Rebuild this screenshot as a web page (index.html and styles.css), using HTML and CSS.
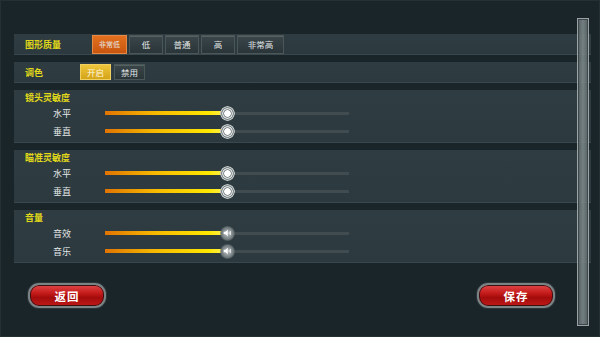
FILE: index.html
```html
<!DOCTYPE html>
<html lang="zh-CN">
<head>
  <meta charset="UTF-8">
  <title>设置</title>
  <link rel="stylesheet" href="styles.css">
</head>
<body>
  <div class="screen">
    <div class="panel row">
      <span class="label label-wide">图形质量</span>
      <div class="btn-group">
        <span class="opt opt-active small">非常低</span>
        <span class="opt">低</span>
        <span class="opt">普通</span>
        <span class="opt">高</span>
        <span class="opt opt-wide">非常高</span>
      </div>
    </div>

    <div class="panel row">
      <span class="label label-narrow">调色</span>
      <div class="btn-group tone">
        <span class="opt opt-on">开启</span>
        <span class="opt">禁用</span>
      </div>
    </div>

    <div class="panel section">
      <div class="label title">镜头灵敏度</div>
      <div class="slider-row">
        <span class="slider-name">水平</span>
        <div class="track"><div class="fill" style="width: 50%"></div><span class="knob"></span></div>
      </div>
      <div class="slider-row">
        <span class="slider-name">垂直</span>
        <div class="track"><div class="fill" style="width: 50%"></div><span class="knob"></span></div>
      </div>
    </div>

    <div class="panel section">
      <div class="label title">瞄准灵敏度</div>
      <div class="slider-row">
        <span class="slider-name">水平</span>
        <div class="track"><div class="fill" style="width: 50%"></div><span class="knob"></span></div>
      </div>
      <div class="slider-row">
        <span class="slider-name">垂直</span>
        <div class="track"><div class="fill" style="width: 50%"></div><span class="knob"></span></div>
      </div>
    </div>

    <div class="panel section">
      <div class="label title">音量</div>
      <div class="slider-row">
        <span class="slider-name">音效</span>
        <div class="track"><div class="fill" style="width: 50%"></div>
          <span class="knob knob-sound">
            <svg viewBox="0 0 12 12" width="10" height="10"><path d="M2 4.5h2l3-2.5v8l-3-2.5h-2z" fill="#fff"/><path d="M8.5 4.5v3M10 3.5v5" stroke="#fff" stroke-width="1"/></svg>
          </span>
        </div>
      </div>
      <div class="slider-row">
        <span class="slider-name">音乐</span>
        <div class="track"><div class="fill" style="width: 50%"></div>
          <span class="knob knob-sound">
            <svg viewBox="0 0 12 12" width="10" height="10"><path d="M2 4.5h2l3-2.5v8l-3-2.5h-2z" fill="#fff"/><path d="M8.5 4.5v3M10 3.5v5" stroke="#fff" stroke-width="1"/></svg>
          </span>
        </div>
      </div>
    </div>

    <div class="bottom-bar">
      <span class="red-btn">返回</span>
      <span class="red-btn">保存</span>
    </div>

    <div class="scrollbar"></div>
  </div>
</body>
</html>
```

FILE: styles.css
```css
html, body {
  margin: 0;
  padding: 0;
  background: #1a2529;
}
body {
  font-family: "Noto Sans CJK SC", "Noto Sans", sans-serif;
  color: #d8dcdc;
}
.screen {
  position: relative;
  width: 598px;
  height: 302px;
  border: 1px solid #243034;
  padding-top: 33px;
  overflow: hidden;
}
.panel {
  margin-left: 13px;
  width: 577px;
  margin-bottom: 7px;
  background: linear-gradient(#2f3c41, #2c393e);
  border-bottom: 1px solid #3a474c;
  box-sizing: border-box;
}
.row {
  display: flex;
  align-items: center;
  height: 21px;
  padding-left: 11px;
}
.label {
  color: #e0d81a;
  font-size: 9px;
  font-weight: bold;
}
.label-wide {
  width: 67px;
}
.label-narrow {
  width: 55px;
}
.btn-group {
  display: flex;
  gap: 2px;
}
.opt {
  display: flex;
  align-items: center;
  justify-content: center;
  width: 34px;
  height: 19px;
  box-sizing: border-box;
  font-size: 8.5px;
  color: #e4e8e8;
  background: linear-gradient(#3a464a, #2a3539);
  border: 1px solid #4b5659;
  box-shadow: inset 0 1px 0 #56625f;
}
.opt-wide {
  width: 47px;
}
.opt-active {
  width: 35px;
  background: linear-gradient(#e2701e, #c9560f);
  border-color: #e58a44;
  box-shadow: none;
}
.small {
  font-size: 7px;
}
.tone {
  gap: 3px;
}
.tone .opt {
  width: 31px;
  height: 16px;
}
.opt-on {
  background: linear-gradient(#eec63c, #d4a318);
  border-color: #f0d060;
  box-shadow: none;
  color: #fff8e0;
}
.section {
  height: 53px;
  padding-top: 1px;
}
.section .title {
  padding-left: 11px;
  line-height: 13px;
}
.slider-row {
  display: flex;
  align-items: center;
  height: 18px;
}
.slider-name {
  width: 52px;
  padding-left: 39px;
  font-size: 9px;
  color: #e4e8e8;
}
.track {
  position: relative;
  width: 244px;
  height: 3px;
  background: #404c50;
}
.fill {
  height: 4px;
  margin-top: -0.5px;
  background: linear-gradient(90deg, #e07400, #f7b800 40%, #ffe800 85%, #fff060);
}
.knob {
  position: absolute;
  left: 122px;
  top: 1.5px;
  width: 15px;
  height: 15px;
  margin: -7.5px 0 0 -7.5px;
  border-radius: 50%;
  background: radial-gradient(circle, #fff 0 3px, #8a9294 3.5px 4px, #d9dddd 4.5px 5px, #7f888a 5.5px 6px, #c4c9ca 6.5px 7px, rgba(120,130,132,0.4) 7.5px);
}
.knob-sound {
  display: flex;
  align-items: center;
  justify-content: center;
  background: radial-gradient(circle, #9aa2a4 0 3px, #6e787a 6px, rgba(90,100,102,0.5) 7.5px);
}
.bottom-bar {
  display: flex;
  justify-content: space-between;
  margin-top: 20px;
  padding: 0 44px 0 27px;
}
.red-btn {
  display: flex;
  align-items: center;
  justify-content: center;
  width: 78px;
  height: 25px;
  box-sizing: border-box;
  border-radius: 11px;
  border: 2px solid #7a8486;
  box-shadow: 0 0 0 1px #2c3538, inset 0 0 0 1px #3a1010;
  background: linear-gradient(#e04848 0%, #c41a1a 40%, #a30c0c 60%, #c01818 100%);
  color: #fff;
  font-size: 11.5px;
  font-weight: bold;
  letter-spacing: 1px;
}
.scrollbar {
  position: absolute;
  left: 576px;
  top: 17px;
  width: 12px;
  height: 308px;
  box-sizing: border-box;
  border: 1px solid #a8b0b2;
  background: linear-gradient(90deg, #5c6769, #7d888a 50%, #5c6769);
  box-shadow: inset 0 0 0 1px #3e4a4d;
  opacity: 0.9;
}
```
